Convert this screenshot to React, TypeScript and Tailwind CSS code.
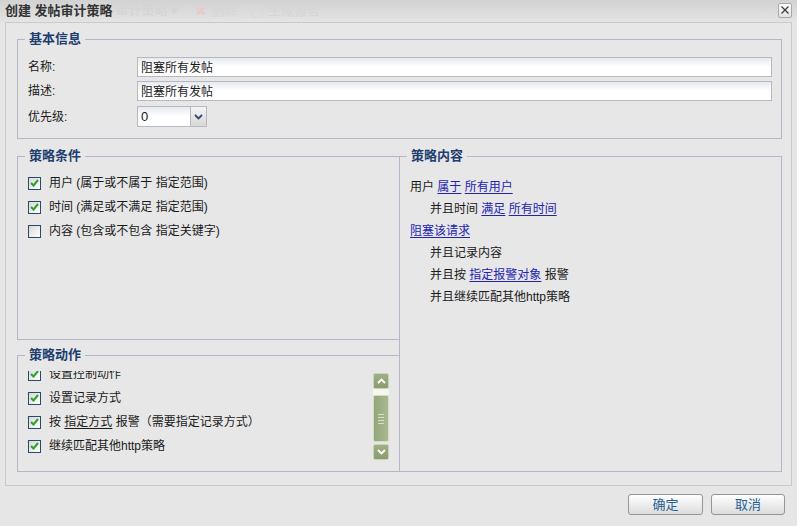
import React from "react";

function Check({ checked }: { checked: boolean }) {
  return (
    <span className="w-[13px] h-[13px] border border-[#2a4868] bg-linear-to-br from-[#d8d8d8] to-[#ffffff] flex items-center justify-center shrink-0">
      {checked && (
        <svg width="9" height="8" viewBox="0 0 9 8">
          <path d="M1 4 L3.5 6.5 L8 1" stroke="#2aa32a" strokeWidth="2" fill="none" />
        </svg>
      )}
    </span>
  );
}

function Legend({ children }: { children: React.ReactNode }) {
  return (
    <legend className="ml-[7px] px-[4px] text-[13px] font-bold text-[#1d3e6f] leading-[16px]">
      {children}
    </legend>
  );
}

function Link({ children }: { children: React.ReactNode }) {
  return <span className="text-[#2323b0] underline underline-offset-2">{children}</span>;
}

function Chevron({ up }: { up?: boolean }) {
  return (
    <svg width="9" height="6" viewBox="0 0 9 6">
      <path d={up ? "M1 5 L4.5 1.5 L8 5" : "M1 1 L4.5 4.5 L8 1"} stroke="#ffffff" strokeWidth="1.8" fill="none" />
    </svg>
  );
}

export default function App() {
  return (
    <div className="w-[797px] h-[526px] bg-[#e6e6e6] flex flex-col font-['Liberation_Sans','Noto_Sans_CJK_SC',sans-serif] text-[12px] text-[#1a1a1a] overflow-hidden">
      {/* title bar */}
      <div className="h-[22px] shrink-0 bg-linear-to-b from-[#d2d2d2] to-[#e4e4e4] flex items-center pl-[5px] pr-[5px]">
        <span className="text-[13px] font-bold text-[#333333] leading-[16px]">创建 发帖审计策略</span>
        <span className="ml-[3px] text-[13px] text-[#d4d4d4] leading-[16px]">审计策略 ▾</span>
        <span className="ml-[8px] w-px h-[14px] bg-[#dadada]" />
        <span className="ml-[8px] text-[14px] text-[#ebcaca] leading-[16px]">✖</span>
        <span className="ml-[4px] text-[13px] text-[#d6d6d6] leading-[16px]">删除</span>
        <span className="ml-[8px] w-px h-[14px] bg-[#dadada]" />
        <span className="ml-[6px] w-[11px] h-[13px] border border-[#d8d8d8]" />
        <span className="ml-[5px] text-[13px] text-[#d6d6d6] leading-[16px]">生成报告</span>
        <div className="flex-1" />
        <span className="w-[14px] h-[15px] mt-[-2px] border border-[#a8a8a8] rounded-[2px] bg-linear-to-b from-[#ffffff] to-[#e2e2e2] flex items-center justify-center">
          <svg width="10" height="10" viewBox="0 0 10 10">
            <path d="M1.5 1.5 L8.5 8.5 M8.5 1.5 L1.5 8.5" stroke="#3a3a3a" strokeWidth="1.2" />
          </svg>
        </span>
      </div>

      {/* main panel */}
      <div className="ml-[5px] w-[787px] h-[464px] shrink-0 border border-[#cacaca] bg-[#e7e7e7] pt-[8px] pl-[11px] pr-[9px] pb-[13px] flex flex-col">
        {/* 基本信息 */}
        <fieldset className="border border-[#b6b6c8] h-[108px] shrink-0">
          <Legend>基本信息</Legend>
          <div className="pt-[10px] pl-[10px] pr-[9px] flex flex-col">
            <div className="flex items-center h-[20px]">
              <span className="w-[109px] leading-[16px]">名称:</span>
              <div className="flex-1 h-[20px] border border-[#b8b8c4] bg-linear-to-b from-[#e6eaee] via-[#ffffff] to-[#ffffff] flex items-center pl-[3px] pt-[1px] leading-[16px]">阻塞所有发帖</div>
            </div>
            <div className="flex items-center h-[20px] mt-[4px]">
              <span className="w-[109px] leading-[16px]">描述:</span>
              <div className="flex-1 h-[20px] border border-[#b8b8c4] bg-linear-to-b from-[#e6eaee] via-[#ffffff] to-[#ffffff] flex items-center pl-[3px] pt-[1px] leading-[16px]">阻塞所有发帖</div>
            </div>
            <div className="flex items-center h-[21px] mt-[5px]">
              <span className="w-[109px] leading-[16px]">优先级:</span>
              <div className="w-[70px] h-[21px] border border-[#b8b8c4] flex">
                <div className="flex-1 bg-linear-to-b from-[#e6eaee] via-[#ffffff] to-[#ffffff] flex items-center pl-[3px] leading-[16px] text-[13px]">0</div>
                <div className="w-[16px] border-l border-[#b8b8c4] bg-linear-to-b from-[#f4f4f4] to-[#d8d8d8] flex items-center justify-center">
                  <svg width="9" height="6" viewBox="0 0 9 6">
                    <path d="M1 1 L4.5 4.5 L8 1" stroke="#2e4a6e" strokeWidth="1.8" fill="none" />
                  </svg>
                </div>
              </div>
            </div>
          </div>
        </fieldset>

        {/* lower area */}
        <div className="mt-[9px] flex h-[324px] shrink-0">
          <div className="w-[382px] flex flex-col">
            <fieldset className="border border-r-0 border-[#b6b6c8] h-[192px] shrink-0">
              <Legend>策略条件</Legend>
              <div className="pt-[7px] flex flex-col">
                {[
                  { c: true, t: "用户 (属于或不属于 指定范围)" },
                  { c: true, t: "时间 (满足或不满足 指定范围)" },
                  { c: false, t: "内容 (包含或不包含 指定关键字)" },
                ].map((r, i) => (
                  <div key={i} className="h-[24px] flex items-center pl-[10px] gap-[8px]">
                    <Check checked={r.c} />
                    <span className="leading-[16px]">{r.t}</span>
                  </div>
                ))}
              </div>
            </fieldset>
            <fieldset className="mt-[7px] border border-r-0 border-[#b6b6c8] h-[125px] shrink-0">
              <Legend>策略动作</Legend>
              <div className="pt-[8px] flex pr-[10px]">
                <div className="flex-1 h-[94px] overflow-hidden">
                  <div className="-mt-[9px] flex flex-col">
                    {[
                      <span key="a">设置控制动作</span>,
                      <span key="b">设置记录方式</span>,
                      <span key="c">
                        按 <span className="underline underline-offset-2">指定方式</span> 报警（需要指定记录方式）
                      </span>,
                      <span key="d">继续匹配其他http策略</span>,
                    ].map((t, i) => (
                      <div key={i} className="h-[24px] flex items-center pl-[10px] gap-[8px] shrink-0">
                        <Check checked={true} />
                        <span className="leading-[16px]">{t}</span>
                      </div>
                    ))}
                  </div>
                </div>
                <div className="w-[16px] mt-[2px] flex flex-col">
                  <div className="h-[16px] border border-[#c9d3b8] rounded-[2px] bg-linear-to-b from-[#9fb083] to-[#8a9b6e] flex items-center justify-center">
                    <Chevron up />
                  </div>
                  <div className="h-[6px] bg-[#f4f6f0]" />
                  <div className="h-[47px] border border-[#d4dcc4] rounded-[2px] bg-linear-to-r from-[#93a679] to-[#a9b991] flex flex-col items-center justify-center gap-[2px]">
                    <span className="w-[6px] h-px bg-[#d7dfca]" />
                    <span className="w-[6px] h-px bg-[#d7dfca]" />
                    <span className="w-[6px] h-px bg-[#d7dfca]" />
                    <span className="w-[6px] h-px bg-[#d7dfca]" />
                  </div>
                  <div className="h-[2px]" />
                  <div className="h-[16px] border border-[#c9d3b8] rounded-[2px] bg-linear-to-b from-[#9fb083] to-[#8a9b6e] flex items-center justify-center">
                    <Chevron />
                  </div>
                </div>
              </div>
            </fieldset>
          </div>

          <fieldset className="w-[383px] border border-[#b6b6c8] h-[324px]">
            <Legend>策略内容</Legend>
            <div className="pt-[12px] pl-[10px] flex flex-col leading-[22px]">
              <div>
                用户 <Link>属于</Link> <Link>所有用户</Link>
              </div>
              <div className="pl-[20px]">
                并且时间 <Link>满足</Link> <Link>所有时间</Link>
              </div>
              <div>
                <Link>阻塞该请求</Link>
              </div>
              <div className="pl-[20px]">并且记录内容</div>
              <div className="pl-[20px]">
                并且按 <Link>指定报警对象</Link> 报警
              </div>
              <div className="pl-[20px]">并且继续匹配其他http策略</div>
            </div>
          </fieldset>
        </div>
      </div>

      {/* buttons */}
      <div className="mt-[8px] flex justify-end gap-[8px] pr-[12px]">
        <button className="w-[75px] h-[21px] border border-[#959595] rounded-[3px] bg-linear-to-b from-[#ffffff] to-[#dcdcdc] text-[#1f5f92] text-[13px] leading-[16px]">确定</button>
        <button className="w-[74px] h-[21px] border border-[#959595] rounded-[3px] bg-linear-to-b from-[#ffffff] to-[#dcdcdc] text-[#1f5f92] text-[13px] leading-[16px]">取消</button>
      </div>
    </div>
  );
}
